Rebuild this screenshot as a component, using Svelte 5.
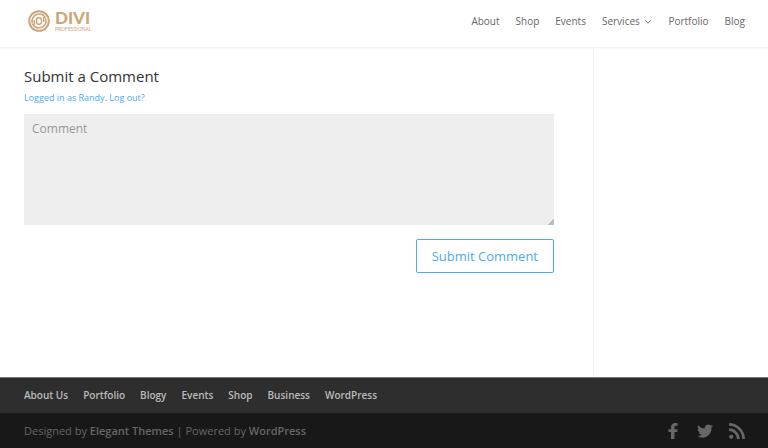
<script>
  const menu = [
    { label: 'About' },
    { label: 'Shop' },
    { label: 'Events' },
    { label: 'Services', children: true },
    { label: 'Portfolio' },
    { label: 'Blog' },
  ];

  const footerMenu = ['About Us', 'Portfolio', 'Blogy', 'Events', 'Shop', 'Business', 'WordPress'];

  let comment = '';
</script>

<div class="page">
  <header>
    <a class="logo" href="#home" aria-label="Divi Professional">
      <svg width="22" height="22" viewBox="0 0 22 22" fill="none" stroke="#cda57c">
        <circle cx="11" cy="11" r="9.8" stroke-width="2" />
        <rect x="8.5" y="7.800" width="5" height="6.400" rx="2.300" stroke-width="1.5" />
        <g stroke-width="1.5">
          <path d="M4.400 13.500A7 7 0 0 1 11 4.100c3 0 5.300 1.500 6.500 4" />
          <path d="M17.600 8.500A7 7 0 0 1 11 17.900c-3 0-5.300-1.500-6.500-4" />
          <path d="M6.300 15V10" />
          <path d="M15.700 7v5" />
        </g>
      </svg>
      <span class="wordmark">
        <strong>DIVI</strong>
        <small>PROFESSIONAL</small>
      </span>
    </a>
    <nav class="main-nav">
      {#each menu as item}
        <a href="#{item.label.toLowerCase()}">
          {item.label}
          {#if item.children}
            <svg width="8" height="6" viewBox="0 0 8 6" fill="none" stroke="currentColor">
              <path d="M1.200 1.500 4 4.200 6.800 1.500" />
            </svg>
          {/if}
        </a>
      {/each}
    </nav>
  </header>

  <div class="content">
    <main>
      <h1>Submit a Comment</h1>
      <p class="logged-in">
        <a href="#profile">Logged in as Randy</a>. <a href="#logout">Log out?</a>
      </p>
      <form on:submit|preventDefault>
        <textarea aria-label="Comment" placeholder="Comment" bind:value={comment}></textarea>
        <button>Submit Comment</button>
      </form>
    </main>
    <aside></aside>
  </div>

  <footer>
    <nav class="footer-nav">
      {#each footerMenu as label}
        <a href="#{label.toLowerCase().replace(' ', '-')}">{label}</a>
      {/each}
    </nav>
    <div class="bottom">
      <p>
        Designed by <a href="#elegant-themes">Elegant Themes</a> | Powered by
        <a href="#wordpress">WordPress</a>
      </p>
      <div class="social">
        <a href="#facebook" aria-label="Facebook">
          <svg width="16" height="16" viewBox="0 0 16 16" fill="currentColor">
            <path d="M6 16V9H3.500V6.200H6V4.300C6 1.600 7.500 0 10.200 0h2.300v2.800H11c-1 0-1.500.5-1.500 1.500v1.900h3L12.200 9H9.500v7z" />
          </svg>
        </a>
        <a href="#twitter" aria-label="Twitter">
          <svg width="16" height="16" viewBox="0 0 16 16" fill="currentColor">
            <path d="M16 3.100c-.6.3-1.200.4-1.900.5.7-.4 1.200-1 1.400-1.800-.6.4-1.300.6-2.100.8A3.300 3.300 0 0 0 7.800 5.600C5.100 5.500 2.700 4.200 1.100 2.200c-.9 1.500-.4 3.400 1 4.400-.5 0-1-.2-1.500-.4 0 1.600 1.100 2.900 2.600 3.200-.5.1-1 .1-1.500.1.4 1.300 1.600 2.200 3.100 2.300A6.600 6.600 0 0 1 0 13.100a9.300 9.300 0 0 0 14.400-8.300c.6-.4 1.200-1 1.600-1.700z" />
          </svg>
        </a>
        <a href="#rss" aria-label="RSS">
          <svg width="16" height="16" viewBox="0 0 16 16" fill="none" stroke="currentColor">
            <circle cx="2.200" cy="13.800" r="2.100" fill="currentColor" stroke="none" />
            <path d="M0 6.700a9.300 9.300 0 0 1 9.300 9.300M0 1.400a14.600 14.600 0 0 1 14.600 14.600" stroke-width="2.700" />
          </svg>
        </a>
      </div>
    </div>
  </footer>
</div>

<style>
  :global(body) {
    margin: 0;
    background-color: #fff;
  }

  .page {
    display: flex;
    flex-direction: column;
    min-height: 100vh;

    color: #666;
    font-family: 'Open Sans', sans-serif;
    font-size: 10px;
    line-height: 16px;
  }

  a {
    color: inherit;
    text-decoration: none;
  }

  header {
    display: flex;
    align-items: flex-start;
    justify-content: space-between;
    height: 48px;
    padding: 0 23px 0 28px;

    border-bottom: 1px solid #f3f3f3;
    box-sizing: border-box;
    box-shadow: 0 1px 1px #f9f9f9;
  }

  .logo {
    display: flex;
    gap: 5px;
    padding-top: 10px;

    color: #cda57c;
  }

  .wordmark {
    display: flex;
    flex-direction: column;

    font-family: Lato, sans-serif;
  }

  .wordmark strong {
    font-size: 17px;
    font-weight: 900;
    line-height: 15px;
  }

  .wordmark small {
    font-size: 5px;
    line-height: 8px;
  }

  .main-nav {
    display: flex;
    gap: 16px;
    padding-top: 13px;
  }

  .main-nav svg {
    margin-left: 2px;
  }

  .content {
    display: flex;
    flex: 1;
  }

  main {
    flex: 1;
    padding: 18px 39px 24px 24px;

    border-right: 1px solid #f3f3f3;
  }

  aside {
    width: 174px;
  }

  h1 {
    margin: 0;

    color: #333;
    font-size: 15px;
    font-weight: 400;
    line-height: 20px;
  }

  .logged-in {
    margin: 4px 0 8px;

    font-size: 9px;
  }

  .logged-in a {
    color: #4aabf0;
  }

  form {
    display: flex;
    flex-direction: column;
    align-items: flex-end;
    gap: 14px;
  }

  textarea {
    display: block;
    width: 100%;
    height: 111px;
    padding: 7px 8px;

    color: #666;
    font-family: inherit;
    font-size: 12px;
    line-height: 16px;

    background-color: #eee;
    border: 0;
    border-radius: 0;
    box-sizing: border-box;
    resize: vertical;
  }

  textarea::placeholder {
    color: #999;
  }

  textarea::-webkit-resizer {
    background: linear-gradient(135deg, transparent 50%, #bbb 50%) right bottom / 6px 6px no-repeat;
  }

  button {
    padding: 5px 15px;

    color: #4aabf0;
    font-family: inherit;
    font-size: 13px;
    line-height: 22px;

    background-color: transparent;
    border: 1px solid #4aabf0;
    border-radius: 2px;
    cursor: pointer;
  }

  .footer-nav {
    display: flex;
    gap: 15px;
    padding: 9px 24px 10px;

    color: #bbb;
    font-weight: 600;

    background-color: #2e2e2e;
    border-top: 1px solid #777;
  }

  .bottom {
    display: flex;
    align-items: center;
    justify-content: space-between;
    padding: 10px 23px 9px 24px;

    color: #666;

    background-color: #181818;
  }

  .bottom p {
    margin: 0;

    font-size: 11px;
  }

  .bottom p a {
    font-weight: 600;
  }

  .social {
    display: flex;
    gap: 16px;
  }

  .social svg {
    display: block;
  }
</style>
